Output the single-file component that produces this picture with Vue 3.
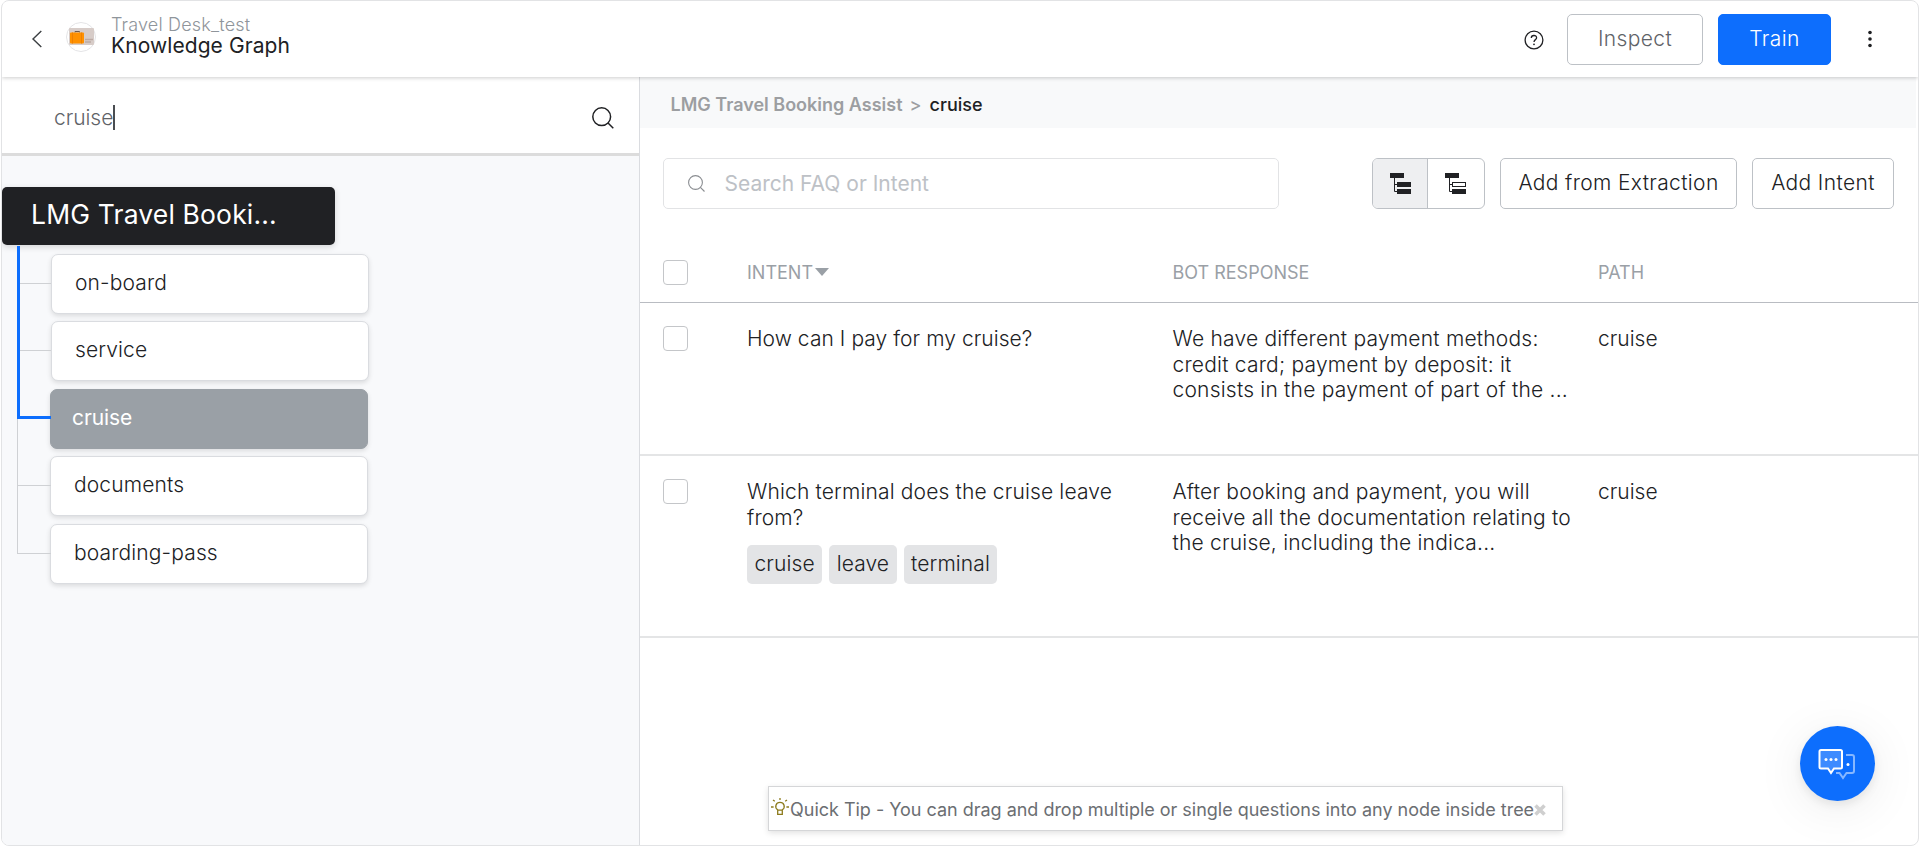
<script setup>
const nodes = [
  { label: 'on-board', shifted: true },
  { label: 'service', shifted: true },
  { label: 'cruise', active: true },
  { label: 'documents' },
  { label: 'boarding-pass' },
]

const rows = [
  {
    intent: ['How can I pay for my cruise?'],
    response: [
      'We have different payment methods:',
      'credit card; payment by deposit: it',
      'consists in the payment of part of the ...',
    ],
    path: 'cruise',
    tags: [],
  },
  {
    intent: ['Which terminal does the cruise leave', 'from?'],
    response: [
      'After booking and payment, you will',
      'receive all the documentation relating to',
      'the cruise, including the indica...',
    ],
    path: 'cruise',
    tags: ['cruise', 'leave', 'terminal'],
  },
]
</script>

<template>
  <div class="window">
    <header class="topbar">
      <svg class="back" width="12" height="18" viewBox="0 0 12 18"><path d="M10.3 1 L2 9 L10.3 17" /></svg>
      <svg class="logo" width="30" height="30" viewBox="0 0 30 30">
        <circle cx="15" cy="15" r="14.5" fill="#fff" stroke="#e4e4e6" />
        <rect x="3" y="6" width="25" height="17" rx="1" fill="#d7ccc8" />
        <path d="M9 10.500 V9.500 H13.500 V10.500" fill="none" stroke="#6d5b50" />
        <rect x="4" y="10.500" width="14" height="11" rx="1" fill="#ff9100" />
        <path d="M6.500 10.500 V21.500 M15.500 10.500 V21.500" stroke="#ef7f00" />
        <path d="M19 17.500 H27 M19 20 H25" stroke="#bcaaa4" stroke-width="1.300" />
      </svg>
      <div class="titles">
        <div class="bot">Travel Desk_test</div>
        <div class="page">Knowledge Graph</div>
      </div>
      <svg class="help" width="20" height="20" viewBox="0 0 20 20">
        <circle cx="10" cy="10" r="8.900" />
        <path d="M7.300 8 C7.300 4.700 12.600 4.700 12.600 7.700 C12.600 9.700 10 9.600 10 12" />
        <circle class="dot" cx="10" cy="14.300" r=".9" />
      </svg>
      <button class="btn inspect">Inspect</button>
      <button class="btn train">Train</button>
      <svg class="more" width="6" height="18" viewBox="0 0 6 18"><circle cx="3" cy="2.500" r="1.800" /><circle cx="3" cy="9" r="1.800" /><circle cx="3" cy="15.500" r="1.800" /></svg>
    </header>

    <div class="body">
      <aside class="side">
        <div class="treesearch">
          <span class="query">cruise</span><i class="caret"></i>
          <svg class="mag" width="22" height="22" viewBox="0 0 22 22"><circle cx="9.700" cy="9.700" r="8.900" /><path d="M16 16 L21.300 21.300" /></svg>
        </div>
        <div class="root">LMG Travel Booki...</div>
        <ul class="tree">
          <li v-for="n in nodes" :key="n.label" :class="{ shifted: n.shifted, active: n.active }">
            <div class="node">{{ n.label }}</div>
          </li>
        </ul>
      </aside>

      <main class="main">
        <nav class="crumbs"><span>LMG Travel Booking Assist</span><span class="sep">&gt;</span><b>cruise</b></nav>
        <div class="tools">
          <div class="faqsearch">
            <svg class="mag" width="17" height="17" viewBox="0 0 17 17"><circle cx="7.500" cy="7.500" r="6.900" /><path d="M12.400 12.400 L16.500 16.500" /></svg>
            <span>Search FAQ or Intent</span>
          </div>
          <div class="toggle">
            <div class="on">
              <svg width="22" height="22" viewBox="0 0 22 22"><path class="wire" d="M4.500 5 V19.500 H8 M4.500 12.500 H8" /><path d="M0 1 H14 V6 H0 Z M7 10 H21 V15 H7 Z M7 17 H21 V22 H7 Z" /></svg>
            </div>
            <div>
              <svg width="22" height="22" viewBox="0 0 22 22"><path class="wire" d="M4.500 5 V19.500 H8 M4.500 12.500 H8" /><path d="M0 1 H14 V6 H0 Z M7 17 H21 V22 H7 Z" /><rect class="wire" x="7.500" y="10.500" width="13" height="4" /></svg>
            </div>
          </div>
          <button class="btn extract">Add from Extraction</button>
          <button class="btn intent">Add Intent</button>
        </div>

        <div class="row head">
          <i class="check"></i>
          <div class="c1">INTENT<i class="sort"></i></div>
          <div class="c2">BOT RESPONSE</div>
          <div class="c3">PATH</div>
        </div>
        <section v-for="(r, i) in rows" :key="i" class="row" :class="'row' + i">
          <i class="check"></i>
          <div class="c1">
            <div v-for="l in r.intent" :key="l">{{ l }}</div>
            <div v-if="r.tags.length" class="tags"><span v-for="t in r.tags" :key="t" class="tag">{{ t }}</span></div>
          </div>
          <div class="c2"><div v-for="l in r.response" :key="l">{{ l }}</div></div>
          <div class="c3">{{ r.path }}</div>
        </section>
      </main>
    </div>

    <div class="tip">
      <svg width="18" height="18" viewBox="0 0 18 18">
        <path d="M6.700 11.800 C3.200 9.500 4.800 4.400 9 4.400 C13.200 4.400 14.800 9.500 11.300 11.800 V16.400 H6.700 Z M6.700 12.200 H11.300 M9 0 V2 M2 2 L3.800 3.300 M16 2 L14.200 3.300 M0 9 H2.600 M15.400 9 H18" />
      </svg>
      <span>Quick Tip - You can drag and drop multiple or single questions into any node inside tree</span>
      <svg class="close" width="12" height="12" viewBox="0 0 12 12"><path d="M1.500 1.500 L10.500 10.500 M10.500 1.500 L1.500 10.500" /></svg>
    </div>

    <div class="fab">
      <svg width="38" height="32" viewBox="0 0 38 32">
        <path d="M28 7 H34 Q36 7 36 9 V23 Q36 25 34 25 H28.500 L25 30 L21.500 25 H18" fill="none" stroke="#86b7ff" stroke-width="2" />
        <path d="M3 2 H22.500 Q24 2 24 3.500 V19 Q24 20.500 22.500 20.500 H16 L13 25 L10 20.500 H3 Q1.500 20.500 1.500 19 V3.500 Q1.500 2 3 2 Z" fill="#3d8bff" stroke="#fff" stroke-width="2" />
        <g fill="#fff"><circle cx="8" cy="11.500" r="1.500" /><circle cx="13" cy="11.500" r="1.500" /><circle cx="18" cy="11.500" r="1.500" /><circle cx="30" cy="16.500" r="1.500" /></g>
      </svg>
    </div>
  </div>
</template>

<style>
body { background: #fff; }
</style>

<style scoped>
* { box-sizing: border-box; }
.window { position: relative; width: 1918px; height: 846px; margin-left: 1px; border: 1px solid #e2e3e5; border-radius: 8px; overflow: hidden; background: #fff; font-family: Inter, "Liberation Sans", sans-serif; font-weight: 300; font-size: 21px; color: #202124; white-space: nowrap; }
svg { display: block; flex: none; }
.topbar { position: relative; z-index: 2; height: 76px; display: flex; align-items: flex-start; background: #fff; box-shadow: 0 1px 4px rgba(0, 0, 0, .2); }
.back { margin: 29px 0 0 29px; fill: none; stroke: #3c4043; stroke-width: 1.4; }
.logo { margin: 21px 0 0 23px; }
.titles { margin: 13px auto 0 15px; }
.bot { font-size: 18px; line-height: 22px; letter-spacing: .18px; color: #8f959b; }
.page { font-size: 21px; line-height: 20px; font-weight: 400; letter-spacing: .08px; }
.help { margin: 29px 23px 0 0; fill: none; stroke: #202124; stroke-width: 1.3; }
.help .dot { fill: #202124; stroke: none; }
.btn { height: 51px; padding: 0 0 2px; border: 1px solid #bdc1c6; border-radius: 5px; background: #fff; font: inherit; color: inherit; text-align: center; line-height: 26px; letter-spacing: .36px; }
.inspect { width: 136px; margin-top: 13px; color: #5f6368; }
.train { width: 113px; margin: 13px 0 0 15px; border-color: #0d6efd; background: #0d6efd; color: #fff; }
.more { margin: 29px 45px 0 36px; fill: #202124; }
.body { display: flex; height: 768px; }
.side { width: 638px; border-right: 1px solid #dadce0; background: #f8f9fb; }
.treesearch { height: 79px; padding: 5px 25px 0 52px; display: flex; align-items: center; background: #fff; border-bottom: 3px solid #dcdcdc; }
.query { color: #5f6368; line-height: 26px; letter-spacing: -.05px; }
.caret { width: 2px; height: 25px; background: #4a4d51; }
.treesearch .mag { margin-top: 1px; }
.mag { margin-left: auto; fill: none; stroke: #202124; stroke-width: 1.5; }
.root { width: 333px; height: 58px; margin-top: 31px; padding-left: 29px; border-radius: 5px; background: #202124; color: #fff; font-size: 26.500px; font-weight: 400; line-height: 54px; letter-spacing: .15px; box-shadow: 0 2px 6px rgba(0, 0, 0, .15); }
.tree { position: relative; list-style: none; margin: 1px 0 0 15px; padding: 8px 0 0 0; display: grid; gap: 7.400px; }
.tree li { position: relative; padding-left: 33px; height: 60px; }
.tree li.shifted { padding-left: 34px; }
.tree li::before { content: ""; box-sizing: border-box; position: absolute; left: 0; top: -38px; width: 34px; height: 68px; border: solid #cfd1d4; border-width: 0 0 1px 1px; }
.tree li:first-child::before { top: -8px; height: 38px; }
.tree li.active::before { z-index: 1; top: -143px; height: 173px; border: solid #0d6efd; border-width: 0 0 3px 3px; }
.node { width: 318px; height: 60px; padding-left: 23px; border: 1px solid #dadce0; border-radius: 7px; background: #fff; line-height: 55px; letter-spacing: .13px; box-shadow: 0 2px 5px rgba(0, 0, 0, .12); }
.active .node { padding-left: 21px; border-color: #9aa0a6; background: #9aa0a6; color: #fff; font-weight: 400; letter-spacing: -.08px; }
.main { flex: 1; min-width: 0; }
.crumbs { height: 51px; margin-right: 2px; padding-left: 30.500px; background: #f8f9fa; font-size: 18px; font-weight: 600; line-height: 55px; color: #9c9ea1; }
.sep { margin: 0 8px 0 7px; font-weight: 500; }
.crumbs b { color: #202124; font-weight: 500; }
.tools { display: flex; padding: 30px 0 0 23px; }
.faqsearch { width: 616px; height: 51px; margin-right: 93px; padding-left: 24px; display: flex; border: 1px solid #e2e3e5; border-radius: 5px; color: #bdc1c6; line-height: 49px; font-weight: 400; letter-spacing: 0; }
.faqsearch .mag { margin: 16px 19.500px 0 0; stroke: #8a8d91; stroke-width: 1.100; }
.toggle { display: flex; width: 113px; height: 51px; border: 1px solid #bdc1c6; border-radius: 6px; overflow: hidden; }
.toggle div { flex: 1; padding: 13px 0 0 17px; }
.toggle .on { flex: 0 0 55px; background: #eeeff1; border-right: 1px solid #bdc1c6; }
.toggle svg { fill: #202124; }
.toggle .wire { fill: none; stroke: #202124; stroke-width: 1; }
.extract { width: 237px; margin-left: 15px; }
.intent { width: 142px; margin-left: 15px; }
.row { display: flex; padding: 24px 0 0 23px; border-bottom: 2px solid #e4e5e6; line-height: 25.500px; }
.head { height: 94px; padding-top: 51px; border-bottom: 1px solid #b9bcc2; font-size: 18px; font-weight: 400; color: #9aa0a6; }
.row0 { height: 153px; padding-top: 23px; }
.row1 { height: 182px; padding-top: 23px; }
.check { flex: none; width: 25px; height: 25px; margin-right: 59px; border: 1px solid #c4c6c9; border-radius: 4px; }
.c1, .c2 { width: 425.500px; flex: none; }
.row0 .c1 { letter-spacing: .06px; }
.row1 .c1 { letter-spacing: .15px; }
.row0 .c2, .row1 .c2 { letter-spacing: .21px; }
.row0 .c3, .row1 .c3 { letter-spacing: 0; }
.sort { display: inline-block; margin: 0 0 3px 2px; border: solid transparent; border-width: 8px 7px 0; border-top-color: #9aa0a6; }
.tags { display: flex; gap: 7px; margin-top: 15px; }
.tag { height: 39px; padding: 0 7.500px; border-radius: 5px; background: #e3e4e6; line-height: 37px; letter-spacing: .1px; }
.tip { position: absolute; left: 766px; top: 785px; width: 795px; height: 45px; padding: 2px; display: flex; border: 1px solid #d5d6d8; background: #fff; color: #6b6e72; font-size: 18px; font-weight: 400; line-height: 42px; letter-spacing: -.015px; box-shadow: 0 2px 6px rgba(0, 0, 0, .12); }
.tip svg { margin: 9px 1px 0 0; fill: none; stroke: #8d7b1c; stroke-width: 1.300; }
.tip .close { margin: 15px 0 0; stroke: #cfcfcf; stroke-width: 3.600; }
.fab { position: absolute; left: 1798px; top: 725px; width: 75px; height: 75px; padding: 22px 0 0 18px; border-radius: 50%; background: #0d6efd; box-shadow: 0 4px 10px rgba(0, 0, 0, .08), 0 8px 50px rgba(0, 0, 0, .08); }
</style>
